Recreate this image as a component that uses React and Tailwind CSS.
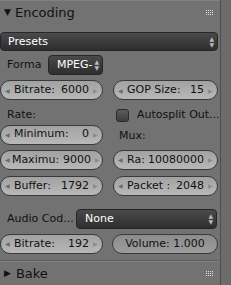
import React from 'react';

function Num({ label, value, className = '' }) {
  return (
    <div
      className={`flex items-center h-[20px] rounded-full border border-[#3a3a3a] bg-gradient-to-b from-[#a2a2a2] to-[#b8b8b8] text-[11px] text-[#111] ${className}`}
    >
      <span className="w-[13px] pl-[4px] text-[6px] text-[#6a6a6a]">◀</span>
      <span className="flex-1 flex justify-between whitespace-nowrap">
        <span>{label}</span>
        <span>{value}</span>
      </span>
      <span className="w-[13px] pl-[4px] text-[6px] text-[#8a8a8a]">▶</span>
    </div>
  );
}

function Menu({ text, className = '' }) {
  return (
    <div
      className={`flex items-center h-[20px] rounded-[4px] border border-[#262626] bg-gradient-to-b from-[#4a4a4a] to-[#2e2e2e] text-[11px] text-white pl-[7px] pr-[3px] ${className}`}
    >
      <span className="flex-1 whitespace-nowrap overflow-hidden">{text}</span>
      <span className="flex flex-col items-center leading-none text-[6px] text-[#bbb]">
        <span>▲</span>
        <span>▼</span>
      </span>
    </div>
  );
}

function Grip() {
  return (
    <div className="grid grid-cols-4 gap-[1px] mr-[7px]">
      {Array.from({ length: 12 }).map((_, i) => (
        <span key={i} className="w-[1px] h-[1px] bg-[#e0e0e0]" />
      ))}
    </div>
  );
}

export default function App() {
  return (
    <div
      className="w-[231px] h-[285px] overflow-hidden bg-[#727272] flex text-[#111]"
      style={{ fontFamily: '"DejaVu Sans", sans-serif' }}
    >
      <div className="w-[220px] flex flex-col">
        {/* header */}
        <div className="h-[25px] flex items-center border-t border-[#808080]">
          <span className="ml-[4px] text-[9px] text-[#111]">▼</span>
          <span className="ml-[4px] text-[13px]">Encoding</span>
          <span className="flex-1" />
          <Grip />
        </div>

        <Menu text="Presets" className="mt-[8px] w-[218px]" />

        <div className="mt-[4px] flex items-center">
          <span className="ml-[7px] w-[41px] text-[11px]">Forma</span>
          <Menu text="MPEG-" className="w-[55px] pl-[8px]" />
        </div>

        <div className="mt-[5px] flex gap-[10px]">
          <Num label="Bitrate:" value="6000" className="w-[103px]" />
          <Num label="GOP Size:" value="15" className="w-[105px]" />
        </div>

        <div className="mt-[8px] flex items-center h-[14px]">
          <span className="ml-[7px] w-[109px] text-[11px]">Rate:</span>
          <span className="w-[13px] h-[13px] rounded-[3px] border border-[#2a2a2a] bg-gradient-to-b from-[#5c5c5c] to-[#3e3e3e]" />
          <span className="ml-[8px] text-[11px] whitespace-nowrap">Autosplit Out...</span>
        </div>

        <div className="mt-[2px] flex items-center gap-[10px]">
          <Num label="Minimum:" value="0" className="w-[103px]" />
          <span className="ml-[6px] mt-[4px] text-[11px]">Mux:</span>
        </div>

        <div className="mt-[5px] flex gap-[10px]">
          <Num label="Maximu:" value="9000" className="w-[103px] [&>span:nth-child(2)]:justify-start [&>span:nth-child(2)]:gap-[4px]" />
          <Num label="Ra:" value="10080000" className="w-[105px]" />
        </div>

        <div className="mt-[6px] flex gap-[10px]">
          <Num label="Buffer:" value="1792" className="w-[103px]" />
          <Num label="Packet :" value="2048" className="w-[105px]" />
        </div>

        <div className="mt-[13px] flex items-center">
          <span className="ml-[7px] w-[69px] text-[11px] whitespace-nowrap">Audio Cod...</span>
          <Menu text="None" className="w-[141px] pl-[8px]" />
        </div>

        <div className="mt-[5px] flex gap-[9px]">
          <Num label="Bitrate:" value="192" className="w-[103px]" />
          <div className="w-[106px] h-[20px] rounded-full border border-[#3a3a3a] bg-gradient-to-b from-[#8c8c8c] to-[#9c9c9c] text-[11px] flex items-center justify-center">
            Volume: 1.000
          </div>
        </div>

        <div className="mt-[6px] w-[218px] h-[1px] bg-[#5a5a5a] border-b border-[#858585] box-content" />

        <div className="h-[24px] flex items-center">
          <span className="ml-[4px] text-[9px]">▶</span>
          <span className="ml-[5px] text-[13px]">Bake</span>
          <span className="flex-1" />
          <Grip />
        </div>
      </div>
      <div className="flex-1 border-l border-[#4e4e4e] bg-[#6c6c6c]" />
    </div>
  );
}
